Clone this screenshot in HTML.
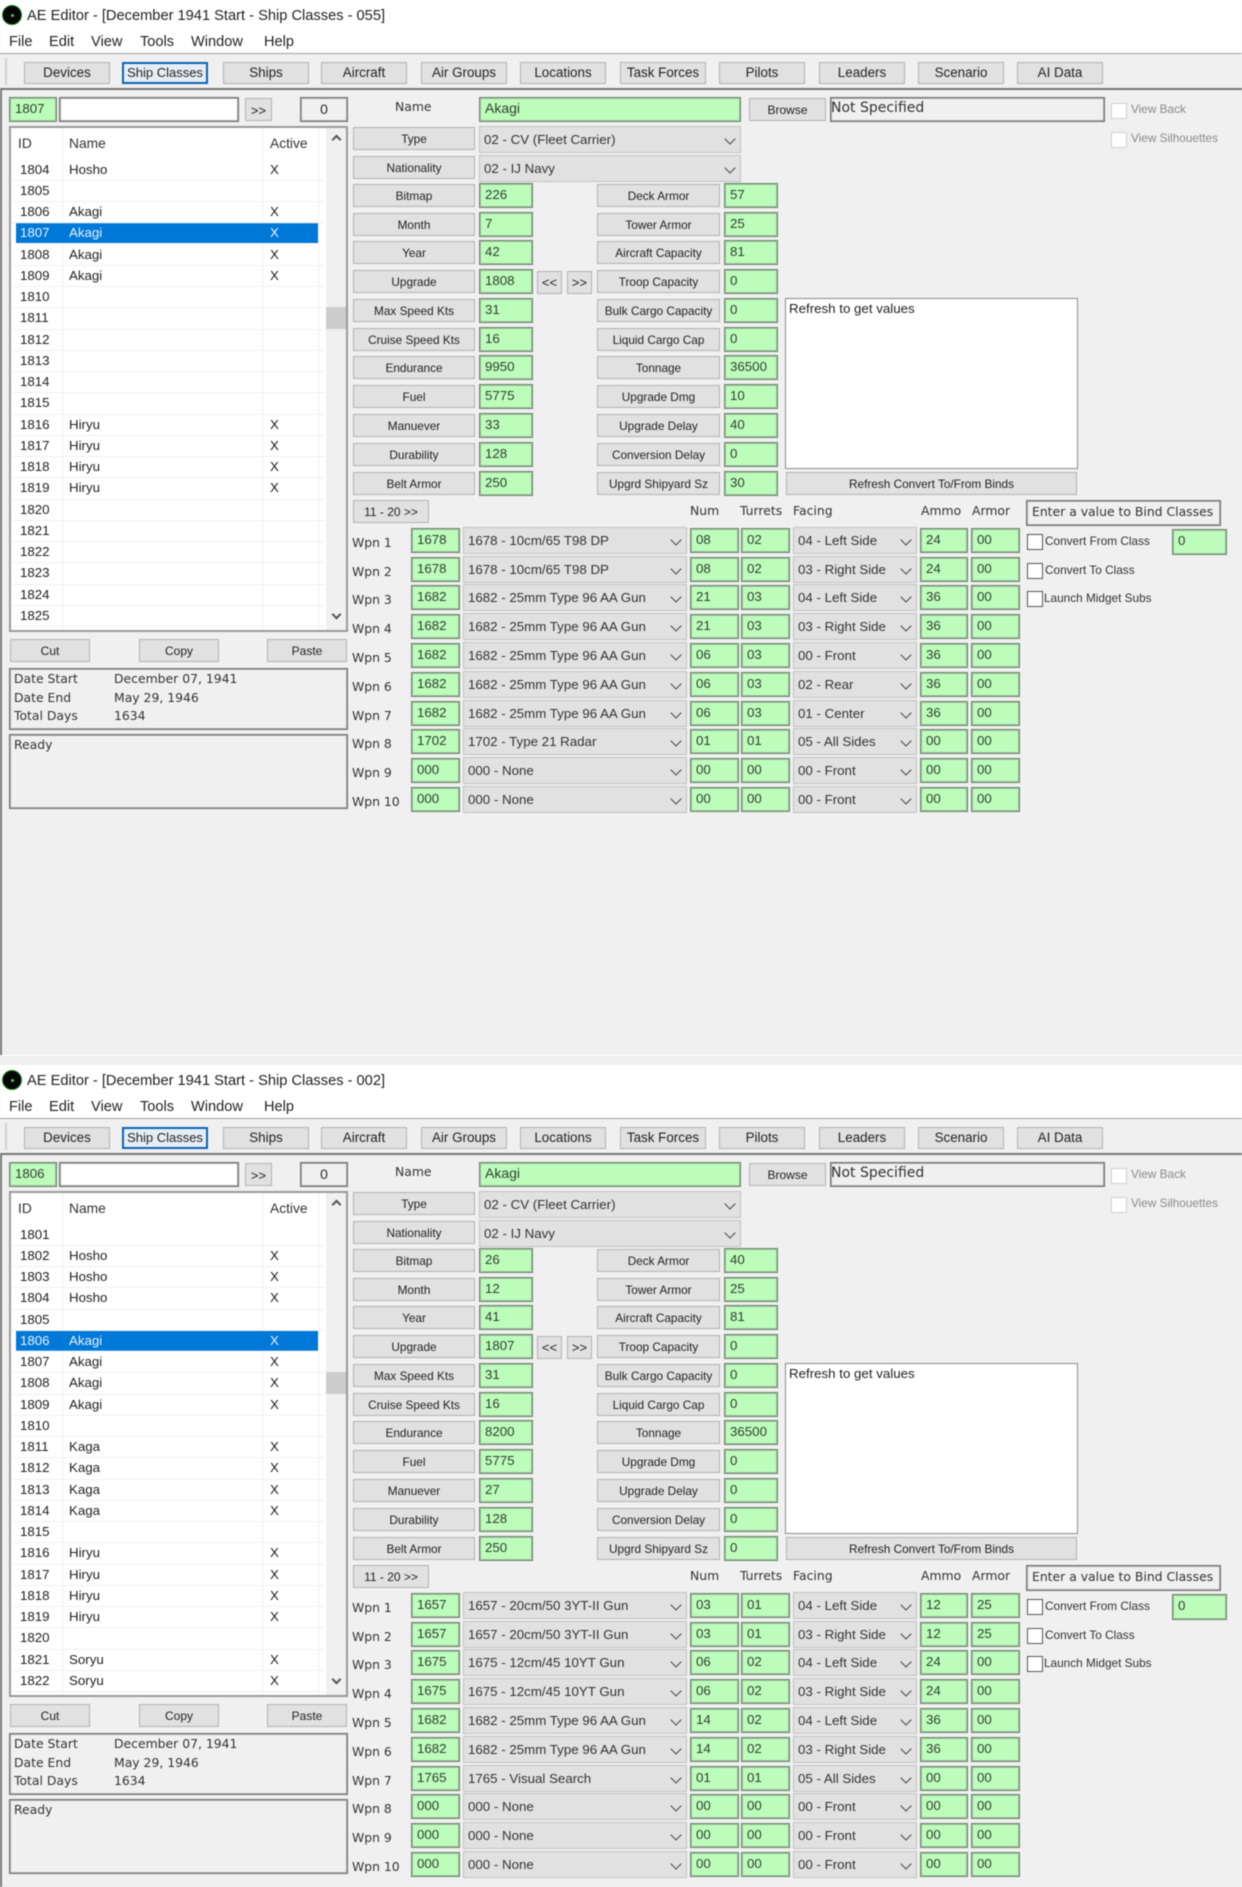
<!DOCTYPE html>
<html><head><meta charset="utf-8"><title>AE Editor</title>
<style>
html,body{margin:0;padding:0;background:#f0f0f0}
#a{position:relative;width:1242px;height:1887px;overflow:hidden;background:#f0f0f0;filter:blur(.4px);font-family:"Liberation Sans",sans-serif;color:#2a2a2a}
#a div,#a span{box-sizing:border-box}
.p{position:absolute;left:0;width:1242px;height:1065px;background:#f0f0f0}
.p div{position:absolute}
.tb{left:0;top:0;width:1242px;height:54px;background:#fff;border-bottom:1px solid #a0a0a0}
.ic{left:2px;top:5px;width:20px;height:20px;border-radius:50%;background:#050505;border:1px solid #1a8a1a}
.ic:after{content:"";position:absolute;left:8px;top:8px;width:3px;height:3px;background:#5fc05f;border-radius:50%}
.tt{left:27px;top:6px;font-size:14.65px;line-height:20px;white-space:nowrap;color:#222}
.mn{top:33px;font-size:14.6px;line-height:18px;color:#222}
.gr{left:5px;top:58px;width:2px;height:27px;background:#d0d0d0}
.bar{left:0;top:88px;width:1242px;height:2px;background:#777}
.lf{left:0;top:90px;width:2px;height:965px;background:#777}
.btn{background:#e1e1e1;border:1px solid #b2b2b2;text-align:center;color:#222;white-space:nowrap}
.tbb{top:62px;width:86px;height:22px;font-size:13.4px;line-height:20px}
.sel{border:2px solid #0a64b8;line-height:18px;background:#e6eef5;font-size:13px}
.g{background:#bdfdbb;border:1px solid #6d856d;box-shadow:inset 0 0 0 1px #9dbf9d;font-size:13.3px;line-height:21px;padding-left:5px;color:#2f3f2f;white-space:nowrap}
.w{background:#fff;border:1px solid #6f6f6f;box-shadow:inset 0 0 0 1px #a8a8a8}
.bx{border:1px solid #6f6f6f;box-shadow:inset 0 0 0 1px #a8a8a8;background:#f0f0f0}
.c{font-family:"DejaVu Sans",sans-serif;font-size:12.4px;white-space:nowrap;color:#333;line-height:16px}
.lbl{left:353px;width:122px;height:23px;font-size:11.8px;line-height:22px}
.lr{left:597px;width:123px;height:23px;font-size:11.8px;line-height:22px}
.fr{left:0;width:0;height:0}
.gi{left:479px;width:54px;height:25px;top:0}
.ri{left:724px;width:54px;height:25px;top:0}
.fr .lbl,.fr .lr{top:1px}
.cb{background:#e1e1e1;border:1px solid #c2c2c2;font-size:13.3px;line-height:26px;padding-left:4px;color:#333;white-space:nowrap}
.cb:after{content:"";position:absolute;right:6px;top:8px;width:7px;height:7px;border-right:1px solid #444;border-bottom:1px solid #444;transform:rotate(45deg)}
.wl{left:352px;top:7px}
.wi{left:411px;width:49px;height:25px;top:0}
.wc{left:463px;width:224px;height:27px;top:-1px}
.wn{left:690px;width:49px;height:25px;top:0}
.wt{left:741px;width:49px;height:25px;top:0}
.wf{left:793px;width:124px;height:27px;top:-1px}
.wa{left:920px;width:48px;height:25px;top:0}
.wr{left:971px;width:49px;height:25px;top:0}
.ls{left:9px;top:126px;width:339px;height:506px;background:#fff;border:2px solid #9a9a9a;overflow:hidden}
.sb{left:315px;top:0;width:21px;height:502px;background:#f0f0f0}
.th{left:0;top:179px;width:20px;height:22px;background:#cdcdcd}
.ar{left:7px;width:7px;height:7px;border-left:2px solid #555;border-top:2px solid #555}
.hd{top:7px;font-size:13.8px;line-height:18px;color:#333}
.vl{width:1px;background:#f0f0f0;top:0;height:502px}
.l{left:-11px;width:325px;height:21.25px;border-bottom:1px solid #f0f0f0;font-size:13.3px;line-height:20px;margin-top:-127px;color:#222}
.l b,.l i,.l u{position:absolute;font-weight:normal;font-style:normal;text-decoration:none;top:0}
.l b{left:20px}.l i{left:69px}.l u{left:270px}
.s{background:#0078d7;color:#e8f2fb;border-bottom:0;height:20px;width:318px;clip-path:inset(0 0 0 16px)}
.s b,.s i,.s u{color:#e8f2fb}
.ck{width:16px;height:16px;background:#fff;border:1px solid #555}
.ckd{border-color:#d0d0d0}
.sm{font-size:11.8px;line-height:16px;white-space:nowrap;color:#333}
</style></head><body><div id="a">

<!-- PANEL 1 -->
<div class="p" style="top:0">
<div class="tb"></div><div class="ic"></div>
<div class="tt">AE Editor - [December 1941 Start - Ship Classes - 055]</div>
<div class="mn" style="left:9px">File</div><div class="mn" style="left:49px">Edit</div><div class="mn" style="left:91px">View</div><div class="mn" style="left:140px">Tools</div><div class="mn" style="left:191px">Window</div><div class="mn" style="left:264px">Help</div>
<div class="gr"></div><div class="bar"></div><div class="lf"></div>
<div style="left:0;top:1055px;width:1242px;height:1px;background:#fff"></div>
<div class="btn tbb" style="left:24px">Devices</div><div class="btn tbb sel" style="left:122px">Ship Classes</div><div class="btn tbb" style="left:223px">Ships</div><div class="btn tbb" style="left:321px">Aircraft</div><div class="btn tbb" style="left:421px">Air Groups</div><div class="btn tbb" style="left:520px">Locations</div><div class="btn tbb" style="left:620px">Task Forces</div><div class="btn tbb" style="left:719px">Pilots</div><div class="btn tbb" style="left:819px">Leaders</div><div class="btn tbb" style="left:918px">Scenario</div><div class="btn tbb" style="left:1017px">AI Data</div>

<div class="g" style="left:9px;top:97px;width:48px;height:25px">1807</div>
<div class="w" style="left:59px;top:97px;width:180px;height:25px"></div>
<div class="btn" style="left:245px;top:98px;width:27px;height:23px;font-size:13px;line-height:23px">&gt;&gt;</div>
<div class="bx" style="left:300px;top:97px;width:48px;height:25px;text-align:center;font-size:14px;line-height:22px">0</div>

<div class="ls">
<div class="hd" style="left:7px">ID</div><div class="hd" style="left:58px">Name</div><div class="hd" style="left:259px">Active</div>
<div class="vl" style="left:51px"></div><div class="vl" style="left:251px"></div><div class="vl" style="left:307px"></div>
<div class="sb"><div class="ar" style="top:8px;transform:rotate(45deg)"></div><div class="th"></div><div class="ar" style="top:483px;transform:rotate(225deg)"></div></div>
<div class="l" style="top:158.5px"><b>1804</b><i>Hosho</i><u>X</u></div>
<div class="l" style="top:179.75px"><b>1805</b></div>
<div class="l" style="top:201px"><b>1806</b><i>Akagi</i><u>X</u></div>
<div class="l s" style="top:222.25px"><b>1807</b><i>Akagi</i><u>X</u></div>
<div class="l" style="top:243.5px"><b>1808</b><i>Akagi</i><u>X</u></div>
<div class="l" style="top:264.75px"><b>1809</b><i>Akagi</i><u>X</u></div>
<div class="l" style="top:286px"><b>1810</b></div>
<div class="l" style="top:307.25px"><b>1811</b></div>
<div class="l" style="top:328.5px"><b>1812</b></div>
<div class="l" style="top:349.75px"><b>1813</b></div>
<div class="l" style="top:371px"><b>1814</b></div>
<div class="l" style="top:392.25px"><b>1815</b></div>
<div class="l" style="top:413.5px"><b>1816</b><i>Hiryu</i><u>X</u></div>
<div class="l" style="top:434.75px"><b>1817</b><i>Hiryu</i><u>X</u></div>
<div class="l" style="top:456px"><b>1818</b><i>Hiryu</i><u>X</u></div>
<div class="l" style="top:477.25px"><b>1819</b><i>Hiryu</i><u>X</u></div>
<div class="l" style="top:498.5px"><b>1820</b></div>
<div class="l" style="top:519.75px"><b>1821</b></div>
<div class="l" style="top:541px"><b>1822</b></div>
<div class="l" style="top:562.25px"><b>1823</b></div>
<div class="l" style="top:583.5px"><b>1824</b></div>
<div class="l" style="top:604.75px"><b>1825</b></div>
</div>

<div class="btn" style="left:10px;top:639px;width:80px;height:23px;font-size:12px;line-height:22px">Cut</div>
<div class="btn" style="left:139px;top:639px;width:80px;height:23px;font-size:12px;line-height:22px">Copy</div>
<div class="btn" style="left:267px;top:639px;width:80px;height:23px;font-size:12px;line-height:22px">Paste</div>
<div class="bx" style="left:9px;top:668px;width:339px;height:62px"></div>
<div class="c" style="left:14px;top:671px">Date Start</div><div class="c" style="left:114px;top:671px">December 07, 1941</div>
<div class="c" style="left:14px;top:690px">Date End</div><div class="c" style="left:114px;top:690px">May 29, 1946</div>
<div class="c" style="left:14px;top:708px">Total Days</div><div class="c" style="left:114px;top:708px">1634</div>
<div class="bx" style="left:9px;top:734px;width:339px;height:75px"></div>
<div class="c" style="left:14px;top:737px">Ready</div>

<div class="c" style="left:395px;top:99px;width:36px;text-align:center">Name</div>
<div class="g" style="left:479px;top:97px;width:262px;height:25px;font-size:14px">Akagi</div>
<div class="btn lbl" style="top:127px">Type</div>
<div class="btn lbl" style="top:156px">Nationality</div>
<div class="cb" style="left:479px;top:126px;width:262px;height:27px">02 - CV (Fleet Carrier)</div>
<div class="cb" style="left:479px;top:155px;width:262px;height:27px">02 - IJ Navy</div>
<div class="btn" style="left:749px;top:98px;width:77px;height:23px;font-size:12px;line-height:23px">Browse</div>
<div class="bx" style="left:830px;top:97px;width:275px;height:25px;padding-left:0"><span class="c" style="font-size:14px;line-height:20px">Not Specified</span></div>
<div class="ck ckd" style="left:1111px;top:103px"></div><div class="sm" style="left:1131px;top:101px;color:#8a8a8a">View Back</div>
<div class="ck ckd" style="left:1111px;top:132px"></div><div class="sm" style="left:1131px;top:130px;color:#8a8a8a">View Silhouettes</div>

<div class="fr" style="top:183px"><div class="btn lbl">Bitmap</div><div class="g gi">226</div><div class="btn lr">Deck Armor</div><div class="g ri">57</div></div>
<div class="fr" style="top:212px"><div class="btn lbl">Month</div><div class="g gi">7</div><div class="btn lr">Tower Armor</div><div class="g ri">25</div></div>
<div class="fr" style="top:240px"><div class="btn lbl">Year</div><div class="g gi">42</div><div class="btn lr">Aircraft Capacity</div><div class="g ri">81</div></div>
<div class="fr" style="top:269px"><div class="btn lbl">Upgrade</div><div class="g gi">1808</div><div class="btn lr">Troop Capacity</div><div class="g ri">0</div></div>
<div class="fr" style="top:298px"><div class="btn lbl">Max Speed Kts</div><div class="g gi">31</div><div class="btn lr">Bulk Cargo Capacity</div><div class="g ri">0</div></div>
<div class="fr" style="top:327px"><div class="btn lbl">Cruise Speed Kts</div><div class="g gi">16</div><div class="btn lr">Liquid Cargo Cap</div><div class="g ri">0</div></div>
<div class="fr" style="top:355px"><div class="btn lbl">Endurance</div><div class="g gi">9950</div><div class="btn lr">Tonnage</div><div class="g ri">36500</div></div>
<div class="fr" style="top:384px"><div class="btn lbl">Fuel</div><div class="g gi">5775</div><div class="btn lr">Upgrade Dmg</div><div class="g ri">10</div></div>
<div class="fr" style="top:413px"><div class="btn lbl">Manuever</div><div class="g gi">33</div><div class="btn lr">Upgrade Delay</div><div class="g ri">40</div></div>
<div class="fr" style="top:442px"><div class="btn lbl">Durability</div><div class="g gi">128</div><div class="btn lr">Conversion Delay</div><div class="g ri">0</div></div>
<div class="fr" style="top:471px"><div class="btn lbl">Belt Armor</div><div class="g gi">250</div><div class="btn lr">Upgrd Shipyard Sz</div><div class="g ri">30</div></div>
<div class="btn" style="left:537px;top:271px;width:25px;height:23px;font-size:13px;line-height:22px">&lt;&lt;</div>
<div class="btn" style="left:567px;top:271px;width:25px;height:23px;font-size:13px;line-height:22px">&gt;&gt;</div>

<div style="left:785px;top:298px;width:293px;height:171px;background:#fff;border:1px solid #8a8a8a;font-size:13.3px;line-height:16px;padding:2px 3px;color:#222">Refresh to get values</div>
<div class="btn" style="left:786px;top:472px;width:291px;height:23px;font-size:11.8px;line-height:22px">Refresh Convert To/From Binds</div>
<div class="btn" style="left:353px;top:500px;width:76px;height:23px;font-size:12px;line-height:22px">11 - 20 &gt;&gt;</div>
<div class="c" style="left:690px;top:503px">Num</div><div class="c" style="left:740px;top:503px">Turrets</div><div class="c" style="left:793px;top:503px">Facing</div><div class="c" style="left:921px;top:503px">Ammo</div><div class="c" style="left:972px;top:503px">Armor</div>
<div class="bx" style="left:1026px;top:500px;width:195px;height:26px;padding-left:5px"><span class="c" style="line-height:22px">Enter a value to Bind Classes</span></div>
<div class="ck" style="left:1027px;top:534px"></div><div class="sm" style="left:1045px;top:533px">Convert From Class</div>
<div class="ck" style="left:1027px;top:563px"></div><div class="sm" style="left:1045px;top:562px">Convert To Class</div>
<div class="ck" style="left:1027px;top:591px"></div><div class="sm" style="left:1044px;top:590px">Launch Midget Subs</div>
<div class="g" style="left:1172px;top:529px;width:55px;height:26px">0</div>

<div class="fr" style="top:528px"><div class="c wl">Wpn 1</div><div class="g wi">1678</div><div class="cb wc">1678 - 10cm/65 T98 DP</div><div class="g wn">08</div><div class="g wt">02</div><div class="cb wf">04 - Left Side</div><div class="g wa">24</div><div class="g wr">00</div></div>
<div class="fr" style="top:557px"><div class="c wl">Wpn 2</div><div class="g wi">1678</div><div class="cb wc">1678 - 10cm/65 T98 DP</div><div class="g wn">08</div><div class="g wt">02</div><div class="cb wf">03 - Right Side</div><div class="g wa">24</div><div class="g wr">00</div></div>
<div class="fr" style="top:585px"><div class="c wl">Wpn 3</div><div class="g wi">1682</div><div class="cb wc">1682 - 25mm Type 96 AA Gun</div><div class="g wn">21</div><div class="g wt">03</div><div class="cb wf">04 - Left Side</div><div class="g wa">36</div><div class="g wr">00</div></div>
<div class="fr" style="top:614px"><div class="c wl">Wpn 4</div><div class="g wi">1682</div><div class="cb wc">1682 - 25mm Type 96 AA Gun</div><div class="g wn">21</div><div class="g wt">03</div><div class="cb wf">03 - Right Side</div><div class="g wa">36</div><div class="g wr">00</div></div>
<div class="fr" style="top:643px"><div class="c wl">Wpn 5</div><div class="g wi">1682</div><div class="cb wc">1682 - 25mm Type 96 AA Gun</div><div class="g wn">06</div><div class="g wt">03</div><div class="cb wf">00 - Front</div><div class="g wa">36</div><div class="g wr">00</div></div>
<div class="fr" style="top:672px"><div class="c wl">Wpn 6</div><div class="g wi">1682</div><div class="cb wc">1682 - 25mm Type 96 AA Gun</div><div class="g wn">06</div><div class="g wt">03</div><div class="cb wf">02 - Rear</div><div class="g wa">36</div><div class="g wr">00</div></div>
<div class="fr" style="top:701px"><div class="c wl">Wpn 7</div><div class="g wi">1682</div><div class="cb wc">1682 - 25mm Type 96 AA Gun</div><div class="g wn">06</div><div class="g wt">03</div><div class="cb wf">01 - Center</div><div class="g wa">36</div><div class="g wr">00</div></div>
<div class="fr" style="top:729px"><div class="c wl">Wpn 8</div><div class="g wi">1702</div><div class="cb wc">1702 - Type 21 Radar</div><div class="g wn">01</div><div class="g wt">01</div><div class="cb wf">05 - All Sides</div><div class="g wa">00</div><div class="g wr">00</div></div>
<div class="fr" style="top:758px"><div class="c wl">Wpn 9</div><div class="g wi">000</div><div class="cb wc">000 - None</div><div class="g wn">00</div><div class="g wt">00</div><div class="cb wf">00 - Front</div><div class="g wa">00</div><div class="g wr">00</div></div>
<div class="fr" style="top:787px"><div class="c wl">Wpn 10</div><div class="g wi">000</div><div class="cb wc">000 - None</div><div class="g wn">00</div><div class="g wt">00</div><div class="cb wf">00 - Front</div><div class="g wa">00</div><div class="g wr">00</div></div>
</div>

<!-- PANEL 2 -->
<div class="p" style="top:1065px;height:822px">
<div class="tb"></div><div class="ic"></div>
<div class="tt">AE Editor - [December 1941 Start - Ship Classes - 002]</div>
<div class="mn" style="left:9px">File</div><div class="mn" style="left:49px">Edit</div><div class="mn" style="left:91px">View</div><div class="mn" style="left:140px">Tools</div><div class="mn" style="left:191px">Window</div><div class="mn" style="left:264px">Help</div>
<div class="gr"></div><div class="bar"></div><div class="lf" style="height:732px"></div>
<div class="btn tbb" style="left:24px">Devices</div><div class="btn tbb sel" style="left:122px">Ship Classes</div><div class="btn tbb" style="left:223px">Ships</div><div class="btn tbb" style="left:321px">Aircraft</div><div class="btn tbb" style="left:421px">Air Groups</div><div class="btn tbb" style="left:520px">Locations</div><div class="btn tbb" style="left:620px">Task Forces</div><div class="btn tbb" style="left:719px">Pilots</div><div class="btn tbb" style="left:819px">Leaders</div><div class="btn tbb" style="left:918px">Scenario</div><div class="btn tbb" style="left:1017px">AI Data</div>

<div class="g" style="left:9px;top:97px;width:48px;height:25px">1806</div>
<div class="w" style="left:59px;top:97px;width:180px;height:25px"></div>
<div class="btn" style="left:245px;top:98px;width:27px;height:23px;font-size:13px;line-height:23px">&gt;&gt;</div>
<div class="bx" style="left:300px;top:97px;width:48px;height:25px;text-align:center;font-size:14px;line-height:22px">0</div>

<div class="ls">
<div class="hd" style="left:7px">ID</div><div class="hd" style="left:58px">Name</div><div class="hd" style="left:259px">Active</div>
<div class="vl" style="left:51px"></div><div class="vl" style="left:251px"></div><div class="vl" style="left:307px"></div>
<div class="sb"><div class="ar" style="top:8px;transform:rotate(45deg)"></div><div class="th"></div><div class="ar" style="top:483px;transform:rotate(225deg)"></div></div>
<div class="l" style="top:158.5px"><b>1801</b></div>
<div class="l" style="top:179.75px"><b>1802</b><i>Hosho</i><u>X</u></div>
<div class="l" style="top:201px"><b>1803</b><i>Hosho</i><u>X</u></div>
<div class="l" style="top:222.25px"><b>1804</b><i>Hosho</i><u>X</u></div>
<div class="l" style="top:243.5px"><b>1805</b></div>
<div class="l s" style="top:264.75px"><b>1806</b><i>Akagi</i><u>X</u></div>
<div class="l" style="top:286px"><b>1807</b><i>Akagi</i><u>X</u></div>
<div class="l" style="top:307.25px"><b>1808</b><i>Akagi</i><u>X</u></div>
<div class="l" style="top:328.5px"><b>1809</b><i>Akagi</i><u>X</u></div>
<div class="l" style="top:349.75px"><b>1810</b></div>
<div class="l" style="top:371px"><b>1811</b><i>Kaga</i><u>X</u></div>
<div class="l" style="top:392.25px"><b>1812</b><i>Kaga</i><u>X</u></div>
<div class="l" style="top:413.5px"><b>1813</b><i>Kaga</i><u>X</u></div>
<div class="l" style="top:434.75px"><b>1814</b><i>Kaga</i><u>X</u></div>
<div class="l" style="top:456px"><b>1815</b></div>
<div class="l" style="top:477.25px"><b>1816</b><i>Hiryu</i><u>X</u></div>
<div class="l" style="top:498.5px"><b>1817</b><i>Hiryu</i><u>X</u></div>
<div class="l" style="top:519.75px"><b>1818</b><i>Hiryu</i><u>X</u></div>
<div class="l" style="top:541px"><b>1819</b><i>Hiryu</i><u>X</u></div>
<div class="l" style="top:562.25px"><b>1820</b></div>
<div class="l" style="top:583.5px"><b>1821</b><i>Soryu</i><u>X</u></div>
<div class="l" style="top:604.75px"><b>1822</b><i>Soryu</i><u>X</u></div>
</div>

<div class="btn" style="left:10px;top:639px;width:80px;height:23px;font-size:12px;line-height:22px">Cut</div>
<div class="btn" style="left:139px;top:639px;width:80px;height:23px;font-size:12px;line-height:22px">Copy</div>
<div class="btn" style="left:267px;top:639px;width:80px;height:23px;font-size:12px;line-height:22px">Paste</div>
<div class="bx" style="left:9px;top:668px;width:339px;height:62px"></div>
<div class="c" style="left:14px;top:671px">Date Start</div><div class="c" style="left:114px;top:671px">December 07, 1941</div>
<div class="c" style="left:14px;top:690px">Date End</div><div class="c" style="left:114px;top:690px">May 29, 1946</div>
<div class="c" style="left:14px;top:708px">Total Days</div><div class="c" style="left:114px;top:708px">1634</div>
<div class="bx" style="left:9px;top:734px;width:339px;height:75px"></div>
<div class="c" style="left:14px;top:737px">Ready</div>

<div class="c" style="left:395px;top:99px;width:36px;text-align:center">Name</div>
<div class="g" style="left:479px;top:97px;width:262px;height:25px;font-size:14px">Akagi</div>
<div class="btn lbl" style="top:127px">Type</div>
<div class="btn lbl" style="top:156px">Nationality</div>
<div class="cb" style="left:479px;top:126px;width:262px;height:27px">02 - CV (Fleet Carrier)</div>
<div class="cb" style="left:479px;top:155px;width:262px;height:27px">02 - IJ Navy</div>
<div class="btn" style="left:749px;top:98px;width:77px;height:23px;font-size:12px;line-height:23px">Browse</div>
<div class="bx" style="left:830px;top:97px;width:275px;height:25px;padding-left:0"><span class="c" style="font-size:14px;line-height:20px">Not Specified</span></div>
<div class="ck ckd" style="left:1111px;top:103px"></div><div class="sm" style="left:1131px;top:101px;color:#8a8a8a">View Back</div>
<div class="ck ckd" style="left:1111px;top:132px"></div><div class="sm" style="left:1131px;top:130px;color:#8a8a8a">View Silhouettes</div>

<div class="fr" style="top:183px"><div class="btn lbl">Bitmap</div><div class="g gi">26</div><div class="btn lr">Deck Armor</div><div class="g ri">40</div></div>
<div class="fr" style="top:212px"><div class="btn lbl">Month</div><div class="g gi">12</div><div class="btn lr">Tower Armor</div><div class="g ri">25</div></div>
<div class="fr" style="top:240px"><div class="btn lbl">Year</div><div class="g gi">41</div><div class="btn lr">Aircraft Capacity</div><div class="g ri">81</div></div>
<div class="fr" style="top:269px"><div class="btn lbl">Upgrade</div><div class="g gi">1807</div><div class="btn lr">Troop Capacity</div><div class="g ri">0</div></div>
<div class="fr" style="top:298px"><div class="btn lbl">Max Speed Kts</div><div class="g gi">31</div><div class="btn lr">Bulk Cargo Capacity</div><div class="g ri">0</div></div>
<div class="fr" style="top:327px"><div class="btn lbl">Cruise Speed Kts</div><div class="g gi">16</div><div class="btn lr">Liquid Cargo Cap</div><div class="g ri">0</div></div>
<div class="fr" style="top:355px"><div class="btn lbl">Endurance</div><div class="g gi">8200</div><div class="btn lr">Tonnage</div><div class="g ri">36500</div></div>
<div class="fr" style="top:384px"><div class="btn lbl">Fuel</div><div class="g gi">5775</div><div class="btn lr">Upgrade Dmg</div><div class="g ri">0</div></div>
<div class="fr" style="top:413px"><div class="btn lbl">Manuever</div><div class="g gi">27</div><div class="btn lr">Upgrade Delay</div><div class="g ri">0</div></div>
<div class="fr" style="top:442px"><div class="btn lbl">Durability</div><div class="g gi">128</div><div class="btn lr">Conversion Delay</div><div class="g ri">0</div></div>
<div class="fr" style="top:471px"><div class="btn lbl">Belt Armor</div><div class="g gi">250</div><div class="btn lr">Upgrd Shipyard Sz</div><div class="g ri">0</div></div>
<div class="btn" style="left:537px;top:271px;width:25px;height:23px;font-size:13px;line-height:22px">&lt;&lt;</div>
<div class="btn" style="left:567px;top:271px;width:25px;height:23px;font-size:13px;line-height:22px">&gt;&gt;</div>

<div style="left:785px;top:298px;width:293px;height:171px;background:#fff;border:1px solid #8a8a8a;font-size:13.3px;line-height:16px;padding:2px 3px;color:#222">Refresh to get values</div>
<div class="btn" style="left:786px;top:472px;width:291px;height:23px;font-size:11.8px;line-height:22px">Refresh Convert To/From Binds</div>
<div class="btn" style="left:353px;top:500px;width:76px;height:23px;font-size:12px;line-height:22px">11 - 20 &gt;&gt;</div>
<div class="c" style="left:690px;top:503px">Num</div><div class="c" style="left:740px;top:503px">Turrets</div><div class="c" style="left:793px;top:503px">Facing</div><div class="c" style="left:921px;top:503px">Ammo</div><div class="c" style="left:972px;top:503px">Armor</div>
<div class="bx" style="left:1026px;top:500px;width:195px;height:26px;padding-left:5px"><span class="c" style="line-height:22px">Enter a value to Bind Classes</span></div>
<div class="ck" style="left:1027px;top:534px"></div><div class="sm" style="left:1045px;top:533px">Convert From Class</div>
<div class="ck" style="left:1027px;top:563px"></div><div class="sm" style="left:1045px;top:562px">Convert To Class</div>
<div class="ck" style="left:1027px;top:591px"></div><div class="sm" style="left:1044px;top:590px">Launch Midget Subs</div>
<div class="g" style="left:1172px;top:529px;width:55px;height:26px">0</div>

<div class="fr" style="top:528px"><div class="c wl">Wpn 1</div><div class="g wi">1657</div><div class="cb wc">1657 - 20cm/50 3YT-II Gun</div><div class="g wn">03</div><div class="g wt">01</div><div class="cb wf">04 - Left Side</div><div class="g wa">12</div><div class="g wr">25</div></div>
<div class="fr" style="top:557px"><div class="c wl">Wpn 2</div><div class="g wi">1657</div><div class="cb wc">1657 - 20cm/50 3YT-II Gun</div><div class="g wn">03</div><div class="g wt">01</div><div class="cb wf">03 - Right Side</div><div class="g wa">12</div><div class="g wr">25</div></div>
<div class="fr" style="top:585px"><div class="c wl">Wpn 3</div><div class="g wi">1675</div><div class="cb wc">1675 - 12cm/45 10YT Gun</div><div class="g wn">06</div><div class="g wt">02</div><div class="cb wf">04 - Left Side</div><div class="g wa">24</div><div class="g wr">00</div></div>
<div class="fr" style="top:614px"><div class="c wl">Wpn 4</div><div class="g wi">1675</div><div class="cb wc">1675 - 12cm/45 10YT Gun</div><div class="g wn">06</div><div class="g wt">02</div><div class="cb wf">03 - Right Side</div><div class="g wa">24</div><div class="g wr">00</div></div>
<div class="fr" style="top:643px"><div class="c wl">Wpn 5</div><div class="g wi">1682</div><div class="cb wc">1682 - 25mm Type 96 AA Gun</div><div class="g wn">14</div><div class="g wt">02</div><div class="cb wf">04 - Left Side</div><div class="g wa">36</div><div class="g wr">00</div></div>
<div class="fr" style="top:672px"><div class="c wl">Wpn 6</div><div class="g wi">1682</div><div class="cb wc">1682 - 25mm Type 96 AA Gun</div><div class="g wn">14</div><div class="g wt">02</div><div class="cb wf">03 - Right Side</div><div class="g wa">36</div><div class="g wr">00</div></div>
<div class="fr" style="top:701px"><div class="c wl">Wpn 7</div><div class="g wi">1765</div><div class="cb wc">1765 - Visual Search</div><div class="g wn">01</div><div class="g wt">01</div><div class="cb wf">05 - All Sides</div><div class="g wa">00</div><div class="g wr">00</div></div>
<div class="fr" style="top:729px"><div class="c wl">Wpn 8</div><div class="g wi">000</div><div class="cb wc">000 - None</div><div class="g wn">00</div><div class="g wt">00</div><div class="cb wf">00 - Front</div><div class="g wa">00</div><div class="g wr">00</div></div>
<div class="fr" style="top:758px"><div class="c wl">Wpn 9</div><div class="g wi">000</div><div class="cb wc">000 - None</div><div class="g wn">00</div><div class="g wt">00</div><div class="cb wf">00 - Front</div><div class="g wa">00</div><div class="g wr">00</div></div>
<div class="fr" style="top:787px"><div class="c wl">Wpn 10</div><div class="g wi">000</div><div class="cb wc">000 - None</div><div class="g wn">00</div><div class="g wt">00</div><div class="cb wf">00 - Front</div><div class="g wa">00</div><div class="g wr">00</div></div>
</div>
</div></body></html>
